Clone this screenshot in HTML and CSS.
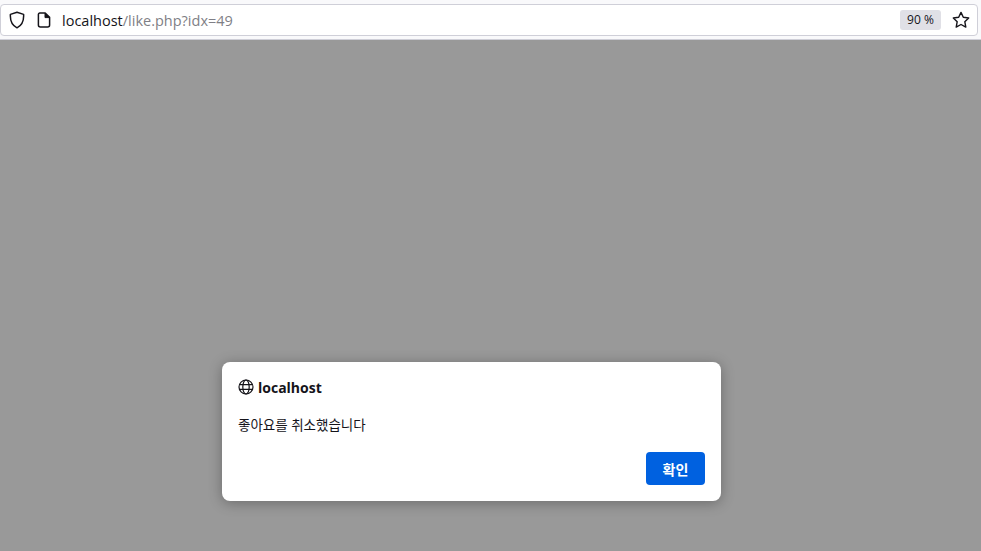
FILE: index.html
```html
<!DOCTYPE html>
<html>
	<head>
		<meta charset="UTF-8">
		<title>localhost</title>
		<link rel="stylesheet" href="styles.css">
	</head>
	<body>
		<div class="toolbar">
			<div class="urlbar">
				<svg class="ico_shield" width="16" height="18" viewBox="0 0 16 18">
					<path d="M8 1.2 L14.6 3.4 C15 9.5 13 14.2 8 16.8 C3 14.2 1 9.5 1.4 3.4 Z" fill="none" stroke="#15141a" stroke-width="1.5" stroke-linejoin="round"/>
				</svg>
				<svg class="ico_page" width="14" height="16" viewBox="0 0 14 16">
					<path d="M2.8 1 H8.2 L12.6 5.4 V13 A2 2 0 0 1 10.6 15 H3.4 A2 2 0 0 1 1.4 13 V2.4 A1.4 1.4 0 0 1 2.8 1 Z" fill="none" stroke="#15141a" stroke-width="1.5" stroke-linejoin="round"/>
					<path d="M8 1 V5.6 H12.6" fill="#15141a" stroke="#15141a" stroke-width="1" stroke-linejoin="round"/>
				</svg>
				<div class="url"><span class="host">localhost</span>/like.php?idx=49</div>
				<div class="zoom_badge">90 %</div>
				<svg class="ico_star" width="18" height="18" viewBox="0 0 18 18">
					<path d="M9 1.4 L11.3 6.3 L16.7 7 L12.8 10.7 L13.8 16.1 L9 13.5 L4.2 16.1 L5.2 10.7 L1.3 7 L6.7 6.3 Z" fill="none" stroke="#15141a" stroke-width="1.4" stroke-linejoin="round"/>
				</svg>
			</div>
		</div>
		<div class="page">
			<div class="dialog">
				<div class="dialog_head">
					<svg width="16" height="16" viewBox="0 0 16 16" fill="none" stroke="#15141a" stroke-width="1.2">
						<circle cx="8" cy="8" r="7"/>
						<ellipse cx="8" cy="8" rx="3.2" ry="7"/>
						<path d="M1.4 5.6 H14.6 M1.4 10.4 H14.6"/>
					</svg>
					<span class="dialog_host">localhost</span>
				</div>
				<div class="dialog_msg">좋아요를 취소했습니다</div>
				<div class="dialog_foot">
					<button class="btn_ok">확인</button>
				</div>
			</div>
		</div>
	</body>
</html>
```

FILE: styles.css
```css
html, body {
	margin: 0;
	padding: 0;
	height: 100%;
}

body {
	width: 981px;
	height: 551px;
	overflow: hidden;
	display: flex;
	flex-direction: column;
	font-family: "Open Sans", "Noto Sans CJK KR", sans-serif;
	color: #15141a;
	background: #999999;
}

.toolbar {
	height: 40px;
	box-sizing: border-box;
	padding: 4px 3px 4px 0;
	background: #f9f9fb;
	border-bottom: 1px solid #cfcfd8;
	flex: none;
}

.urlbar {
	height: 32px;
	box-sizing: border-box;
	display: flex;
	align-items: center;
	padding: 0 7px 0 8px;
	background: #ffffff;
	border: 1px solid #cfcfd8;
	border-radius: 4px;
}

.ico_page {
	margin-left: 12px;
}

.url {
	margin-left: 11px;
	flex: 1;
	font-size: 14.5px;
	color: #7f7f86;
}

.host {
	color: #15141a;
}

.zoom_badge {
	width: 41px;
	height: 20px;
	line-height: 20px;
	text-align: center;
	font-size: 12px;
	background: #e0e0e6;
	border-radius: 3px;
	margin-right: 11px;
}

.page {
	flex: 1;
	display: flex;
	align-items: flex-end;
	padding: 0 0 50px 222px;
}

.dialog {
	width: 499px;
	height: 139px;
	box-sizing: border-box;
	padding: 16px 16px 16px 16px;
	background: #ffffff;
	border-radius: 8px;
	box-shadow: 0 2px 14px rgba(0, 0, 0, 0.3);
	display: flex;
	flex-direction: column;
}

.dialog_head {
	display: flex;
	align-items: center;
	height: 18px;
}

.dialog_host {
	margin-left: 4px;
	font-size: 14px;
	font-weight: 700;
}

.dialog_msg {
	margin-top: 19px;
	font-size: 13.5px;
	line-height: 20px;
}

.dialog_foot {
	margin-top: auto;
	display: flex;
	justify-content: flex-end;
}

.btn_ok {
	width: 59px;
	height: 33px;
	border: 0;
	border-radius: 4px;
	background: #0061e0;
	color: #ffffff;
	font-family: inherit;
	font-size: 14px;
	font-weight: 700;
}
```
